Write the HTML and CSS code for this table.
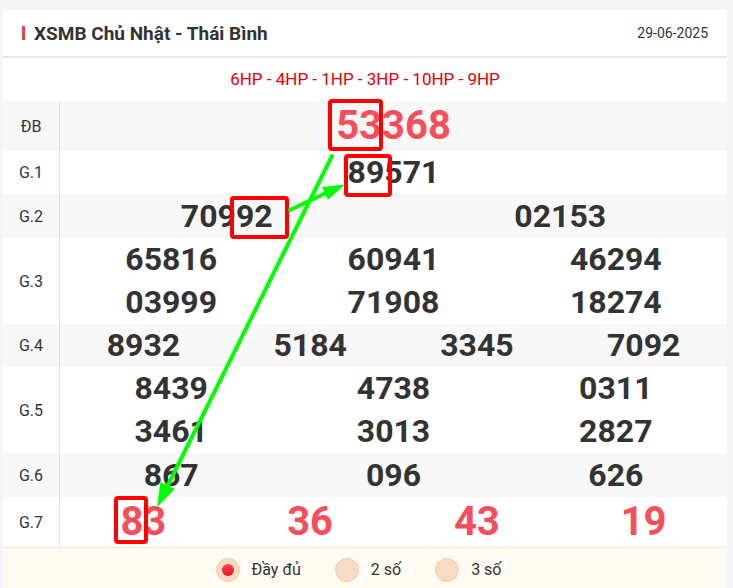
FILE: index.html
```html
<!DOCTYPE html>
<html lang="vi">

<head>
  <meta charset="UTF-8">
  <meta name="viewport" content="width=device-width, initial-scale=1.0">
  <title>XSMB Chủ Nhật - Thái Bình</title>
  <link rel="stylesheet" href="styles.css">
</head>

<body>
  <div class="result-box">
    <div class="box-head">
      <h2 class="box-title">XSMB Chủ Nhật - Thái Bình</h2>
      <span class="box-date">29-06-2025</span>
    </div>
    <div class="codes">6HP - 4HP - 1HP - 3HP - 10HP - 9HP</div>

    <div class="prizes">
      <div class="prize alt">
        <div class="prize-name">ĐB</div>
        <div class="nums cols-1"><span class="num big red">53368</span></div>
      </div>
      <div class="prize">
        <div class="prize-name">G.1</div>
        <div class="nums cols-1"><span class="num">89571</span></div>
      </div>
      <div class="prize alt tall">
        <div class="prize-name">G.2</div>
        <div class="nums cols-2">
          <span class="num">70992</span>
          <span class="num">02153</span>
        </div>
      </div>
      <div class="prize">
        <div class="prize-name">G.3</div>
        <div class="nums cols-3">
          <span class="num">65816</span>
          <span class="num">60941</span>
          <span class="num">46294</span>
          <span class="num">03999</span>
          <span class="num">71908</span>
          <span class="num">18274</span>
        </div>
      </div>
      <div class="prize alt">
        <div class="prize-name">G.4</div>
        <div class="nums cols-4">
          <span class="num">8932</span>
          <span class="num">5184</span>
          <span class="num">3345</span>
          <span class="num">7092</span>
        </div>
      </div>
      <div class="prize">
        <div class="prize-name">G.5</div>
        <div class="nums cols-3">
          <span class="num">8439</span>
          <span class="num">4738</span>
          <span class="num">0311</span>
          <span class="num">3461</span>
          <span class="num">3013</span>
          <span class="num">2827</span>
        </div>
      </div>
      <div class="prize alt tall">
        <div class="prize-name">G.6</div>
        <div class="nums cols-3">
          <span class="num">867</span>
          <span class="num">096</span>
          <span class="num">626</span>
        </div>
      </div>
      <div class="prize">
        <div class="prize-name">G.7</div>
        <div class="nums cols-4">
          <span class="num big red">83</span>
          <span class="num big red">36</span>
          <span class="num big red">43</span>
          <span class="num big red">19</span>
        </div>
      </div>
    </div>

    <div class="box-foot">
      <label class="opt">
        <span class="dot checked"></span>
        <span>Đầy đủ</span>
      </label>
      <label class="opt">
        <span class="dot"></span>
        <span>2 số</span>
      </label>
      <label class="opt">
        <span class="dot"></span>
        <span>3 số</span>
      </label>
    </div>
  </div>

  <!-- annotation layer drawn over the table -->
  <svg class="marks" width="733" height="588" viewBox="0 0 733 588">
    <g fill="none" stroke="#ff0000" stroke-width="4">
      <rect x="330" y="101" width="51" height="48" rx="2" />
      <rect x="346" y="156" width="44" height="39" rx="2" />
      <rect x="232" y="198" width="55" height="39" rx="2" />
      <rect x="116" y="498" width="30" height="44" rx="2" />
    </g>
    <g stroke="#00ff00" stroke-width="4" stroke-linecap="round" fill="#00ff00">
      <line x1="290" y1="210" x2="326" y2="193" />
      <polygon points="345,184.5 328,199.7 322,187" stroke="none" />
      <line x1="332" y1="156" x2="168" y2="485" />
      <polygon points="157,507 175,489 160.5,482" stroke="none" />
    </g>
  </svg>
</body>

</html>
```

FILE: styles.css
```css
body {
  margin: 0;
  background: #f5f5f7;
  font-family: Roboto, "Liberation Sans", Arial, sans-serif;
  color: #333;
  overflow: hidden;
}

.result-box {
  background: #fff;
  margin: 10px 6px 0 3px;
}

.box-head {
  height: 46px;
  padding: 0 19px;
  display: flex;
  align-items: center;
  justify-content: space-between;
  border-bottom: 2px solid #e8e6e9;
}

.box-title {
  margin: 0;
  font-size: 19px;
  font-weight: 700;
  color: #333;
  display: flex;
  align-items: center;
}

.box-title::before {
  content: "";
  width: 3px;
  height: 14px;
  background: #e8454b;
  margin-right: 9px;
}

.box-date {
  font-size: 14px;
  color: #333;
}

.codes {
  height: 43px;
  line-height: 43px;
  text-align: center;
  font-size: 17px;
  color: #e60000;
}

.prize {
  display: flex;
  background: #fff;
}

.prize.alt {
  background: #f8f8f8;
}

.prize-name {
  width: 57px;
  box-sizing: border-box;
  border-right: 1px solid #e2e2e2;
  display: flex;
  align-items: center;
  justify-content: center;
  font-size: 16px;
  color: #333;
}

.nums {
  flex: 1;
  display: grid;
  text-align: center;
}

.cols-1 { grid-template-columns: 1fr; }
.cols-2 { grid-template-columns: repeat(2, 1fr); }
.cols-3 { grid-template-columns: repeat(3, 1fr); }
.cols-4 { grid-template-columns: repeat(4, 1fr); }

.num {
  font-size: 32px;
  font-weight: 700;
  line-height: 43px;
  color: #333;
}

.prize.tall .num {
  line-height: 44px;
}

.num.big {
  font-size: 40px;
  line-height: 50px;
}

.num.red {
  color: #f64f5b;
}

.box-foot {
  height: 43px;
  background: #fffaf2;
  border-top: 1px solid #f3e4cf;
  display: flex;
  align-items: center;
  justify-content: center;
  gap: 34px;
  padding-right: 13px;
}

.opt {
  display: flex;
  align-items: center;
  gap: 12px;
  font-size: 16px;
  color: #333;
  cursor: pointer;
}

.dot {
  width: 24px;
  height: 24px;
  box-sizing: border-box;
  border-radius: 50%;
  background: #f7dbc4;
  border: 1px solid #efcdb0;
  display: flex;
  align-items: center;
  justify-content: center;
}

.dot.checked::after {
  content: "";
  width: 12px;
  height: 12px;
  border-radius: 50%;
  background: linear-gradient(#ff4352, #e3101d);
}

.marks {
  position: absolute;
  top: 0;
  left: 0;
  pointer-events: none;
}
```
